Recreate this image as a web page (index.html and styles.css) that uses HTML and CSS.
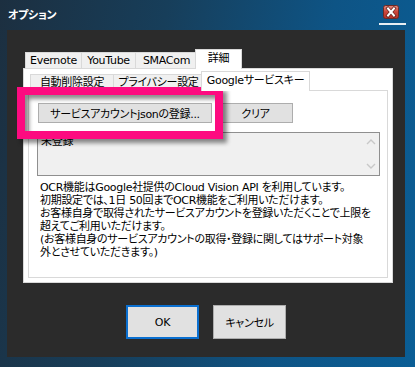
FILE: index.html
```html
<!DOCTYPE html>
<html lang="ja">
<head>
<meta charset="utf-8">
<title>オプション</title>
<link rel="stylesheet" href="styles.css">
</head>
<body>
<div class="window">
  <div class="titlebar">
    <span class="title">オプション</span>
    <div class="close-wrap">
      <svg class="close" width="16" height="14" viewBox="0 0 16 14">
        <defs>
          <linearGradient id="cg" x1="0" y1="0" x2="0" y2="1">
            <stop offset="0" stop-color="#e08a80"/>
            <stop offset="0.5" stop-color="#c8453a"/>
            <stop offset="1" stop-color="#b53228"/>
          </linearGradient>
        </defs>
        <rect x="0.5" y="0.5" width="15" height="13" rx="2" fill="url(#cg)" stroke="#6e2a24"/>
        <path d="M5 3.5 L11 10.5 M11 3.5 L5 10.5" stroke="#5a1d18" stroke-width="3.4" stroke-linecap="square"/>
        <path d="M5 3.5 L11 10.5 M11 3.5 L5 10.5" stroke="#ffffff" stroke-width="2" stroke-linecap="square"/>
      </svg>
      <div class="close-line"></div>
    </div>
  </div>
  <div class="client">
    <div class="tabctl">
      <div class="tabs">
        <div class="tab t-ever">Evernote</div>
        <div class="tab t-yt">YouTube</div>
        <div class="tab t-sma">SMACom</div>
        <div class="tab t-det sel">詳細</div>
      </div>
      <div class="panel">
        <div class="tabs inner">
          <div class="tab t-auto">自動削除設定</div>
          <div class="tab t-priv">プライバシー設定</div>
          <div class="tab t-goog sel">Googleサービスキー</div>
        </div>
        <div class="panel2">
          <div class="btnrow">
            <div class="btn btn-reg">サービスアカウントjsonの登録...</div>
            <div class="btn btn-clear">クリア</div>
          </div>
          <div class="textbox">
            <span class="tb-text">未登録</span>
            <div class="scroll">
              <svg width="10" height="6" viewBox="0 0 10 6"><path d="M1 5 L5 1 L9 5" fill="none" stroke="#c8c8c8" stroke-width="1.4"/></svg>
              <svg width="10" height="6" viewBox="0 0 10 6"><path d="M1 1 L5 5 L9 1" fill="none" stroke="#c8c8c8" stroke-width="1.4"/></svg>
            </div>
          </div>
          <p class="note">OCR機能はGoogle社提供のCloud Vision API を利用しています。<br>初期設定では、1日 50回までOCR機能をご利用いただけます。<br>お客様自身で取得されたサービスアカウントを登録いただくことで上限を<br>超えてご利用いただけます。<br>(お客様自身のサービスアカウントの取得・登録に関してはサポート対象<br>外とさせていただきます。)</p>
        </div>
      </div>
    </div>
    <div class="dlgbtns">
      <div class="btn dlg ok">OK</div>
      <div class="btn dlg">キャンセル</div>
    </div>
  </div>
  <div class="pink"></div>
</div>
</body>
</html>
```
FILE: styles.css
```css
* { box-sizing: border-box; }
html, body { margin: 0; padding: 0; }
body {
  width: 415px;
  height: 367px;
  overflow: hidden;
  font-family: "DejaVu Sans", "Noto Sans CJK JP", sans-serif;
  font-size: 11px;
  letter-spacing: -0.3px;
  font-feature-settings: "palt";
  color: #000;
}
.window {
  position: relative;
  width: 415px;
  height: 367px;
  display: flex;
  flex-direction: column;
  background: linear-gradient(100deg, #1c2f40 0%, #173e5a 35%, #0e5485 70%, #0a5e96 100%);
}
.titlebar {
  height: 30px;
  display: flex;
  align-items: flex-start;
  justify-content: space-between;
  padding: 8px 9px 0 8px;
}
.title {
  color: #fff;
  font-weight: bold;
  font-size: 11px;
  line-height: 16px;
}
.close-wrap {
  display: flex;
  flex-direction: column;
  align-items: flex-start;
  margin-top: -3px;
}
.close { display: block; margin-left: 4px; }
.close-line {
  width: 27px;
  height: 2px;
  background: #e8eef2;
  margin-top: 4px;
}
.client {
  height: 327px;
  margin: 0 10px 0 7px;
  background: #2b2b2b;
  padding: 19px 12px 0 16px;
  display: flex;
  flex-direction: column;
}
.tabctl { width: 370px; }
.tabs {
  display: flex;
  align-items: flex-end;
  padding-left: 2px;
  height: 19px;
}
.tab {
  height: 16px;
  border: 1px solid #d9d9d9;
  border-bottom: none;
  background: #f0f0f0;
  line-height: 15px;
  text-align: center;
  white-space: nowrap;
  margin-right: -1px;
}
.tab.sel {
  position: relative;
  z-index: 1;
  height: 20px;
  margin: 0 -2px -1px -2px;
  background: #fff;
  line-height: 18px;
}
.t-ever { width: 57px; }
.t-yt { width: 55px; }
.t-sma { width: 63px; }
.t-det { width: 47px; }
.panel {
  height: 215px;
  background: #fff;
  border: 1px solid #d9d9d9;
  padding: 2px 4px 0 4px;
}
.tabs.inner { padding-left: 2px; }
.t-auto { width: 84px; }
.t-priv { width: 91px; }
.t-goog { width: 109px; }
.panel2 {
  height: 188px;
  border: 1px solid #d9d9d9;
  background: #fff;
  padding: 12px 7px 0 8px;
}
.btnrow {
  display: flex;
  gap: 6px;
  margin-left: 1px;
}
.btn {
  height: 20px;
  background: #e1e1e1;
  border: 1px solid #adadad;
  display: flex;
  align-items: center;
  justify-content: center;
  white-space: nowrap;
}
.btn-reg { width: 174px; }
.btn-clear { width: 75px; }
.textbox {
  margin-top: 9px;
  height: 44px;
  border: 1px solid #8f8f8f;
  background: #f0f0f0;
  display: flex;
  justify-content: space-between;
}
.tb-text {
  padding: 2px 0 0 3px;
  line-height: 14px;
}
.scroll {
  width: 17px;
  display: flex;
  flex-direction: column;
  justify-content: space-between;
  align-items: center;
  padding: 6px 0 6px 0;
}
.scroll svg { display: block; }
.note {
  margin: 5px 0 0 3px;
  line-height: 13px;
  white-space: nowrap;
}
.dlgbtns {
  display: flex;
  justify-content: center;
  gap: 14px;
  margin-top: 22px;
  margin-left: -4px;
}
.btn.dlg {
  width: 73px;
  height: 34px;
}
.btn.ok {
  border: 2px solid #0a6fd0;
}
.pink {
  position: absolute;
  left: 17px;
  top: 87px;
  width: 206px;
  height: 52px;
  border: 8px solid #fd0b80;
  filter: drop-shadow(4px 4px 2px rgba(0,0,0,0.45));
}
```
